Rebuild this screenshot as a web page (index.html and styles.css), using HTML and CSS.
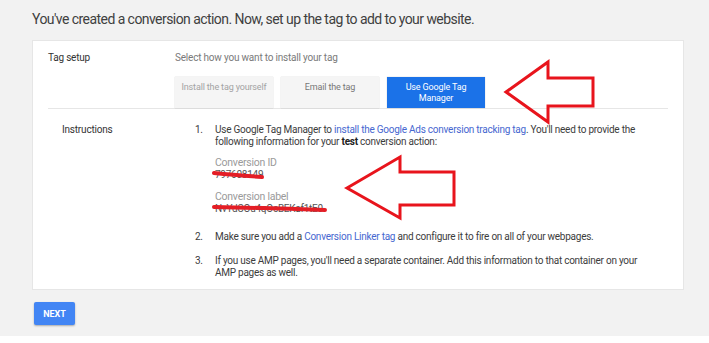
FILE: index.html
```html
<!DOCTYPE html>
<html>
<head>
<meta charset="utf-8">
<link rel="stylesheet" href="styles.css">
</head>
<body>
<div class="page">
  <h1 class="title">You've created a conversion action. Now, set up the tag to add to your website.</h1>
  <div class="card">
    <div class="setup">
      <div class="label">Tag setup</div>
      <div class="setup-body">
        <div class="hint">Select how you want to install your tag</div>
        <div class="options">
          <div class="opt opt-dim">Install the tag yourself</div>
          <div class="opt">Email the tag</div>
          <div class="opt opt-active">Use Google Tag Manager</div>
        </div>
      </div>
    </div>
    <div class="instr">
      <div class="label label-instr">Instructions</div>
      <ol class="steps">
        <li class="step">
          <span class="num">1.</span>
          <div class="step-body">
            <p class="line">Use Google Tag Manager to <a class="link">install the Google Ads conversion tracking tag</a>. You'll need to provide the following information for your <b>test</b> conversion action:</p>
            <div class="field">
              <div class="field-label">Conversion ID</div>
              <div class="field-value">797608149</div>
            </div>
            <div class="field">
              <div class="field-label">Conversion label</div>
              <div class="field-value">NvYdCOu4qOcBEKaf1tE0</div>
            </div>
          </div>
        </li>
        <li class="step">
          <span class="num">2.</span>
          <div class="step-body"><p class="line">Make sure you add a <a class="link">Conversion Linker tag</a> and configure it to fire on all of your webpages.</p></div>
        </li>
        <li class="step">
          <span class="num">3.</span>
          <div class="step-body"><p class="line">If you use AMP pages, you'll need a separate container. Add this information to that container on your AMP pages as well.</p></div>
        </li>
      </ol>
    </div>
  </div>
  <button class="next">NEXT</button>

  <svg class="marks" width="709" height="343" viewBox="0 0 709 343">
    <g fill="none" stroke="#e8141c" stroke-width="3" stroke-linejoin="miter">
      <path d="M506 92 L548 62 L548 78 L593 78 L593 106 L548 106 L548 122 Z"/>
      <path d="M347 188 L400 157 L400 172 L454 172 L454 205 L400 205 L400 218 Z"/>
    </g>
    <g stroke="#e41e26" stroke-width="4" stroke-linecap="round" fill="none">
      <path d="M214 173 Q235 175 262 177"/>
      <path d="M214 207 Q270 208 325 210"/>
    </g>
  </svg>
</div>
</body>
</html>
```
FILE: styles.css
```css
html, body {
  margin: 0;
  padding: 0;
  background: #ffffff;
}
body {
  font-family: Roboto, "Liberation Sans", sans-serif;
  color: #3c3c3c;
}
.page {
  position: relative;
  height: 336px;
  background: #f2f2f2;
  padding: 0 26px 0 33px;
  box-sizing: border-box;
  overflow: hidden;
}
.title {
  margin: 0 0 0 -1px;
  padding: 11px 0 0 0;
  height: 41px;
  box-sizing: border-box;
  font-size: 14px;
  line-height: 17px;
  font-weight: 400;
  letter-spacing: -0.56px;
  color: #404040;
}
.card {
  background: #ffffff;
  box-shadow: 0 0 0 1px #e6e6e6;
  width: 650px;
  height: 248px;
  box-sizing: border-box;
}
.setup {
  display: flex;
  margin: 0 15px;
  padding-top: 10px;
  border-bottom: 1px solid #e6e6e6;
}
.label {
  font-size: 10px;
  line-height: 14px;
  color: #333;
  letter-spacing: -0.2px;
}
.setup .label { width: 127px; flex: none; }
.hint {
  font-size: 10px;
  line-height: 14px;
  color: #7a7a7a;
  letter-spacing: -0.2px;
}
.options {
  display: flex;
  gap: 8px;
  margin-top: 12px;
}
.opt {
  width: 98px;
  height: 31px;
  box-sizing: border-box;
  padding-top: 5px;
  background: #f5f5f5;
  box-shadow: 0 0 1px rgba(0,0,0,0.25);
  text-align: center;
  font-size: 9px;
  line-height: 11px;
  color: #777;
  letter-spacing: -0.15px;
}
.opt-dim { color: #a3a3a3; }
.opt-active {
  background: #1b72e8;
  color: #ffffff;
  padding: 5px 18px 0;
}
.instr {
  display: flex;
  padding: 15px 0 10px 29px;
}
.label-instr { width: 133px; flex: none; line-height: 12px; }
.steps {
  list-style: none;
  margin: 0;
  padding: 0;
  width: 460px;
}
.step {
  display: flex;
  font-size: 10px;
  line-height: 12px;
  color: #3c3c3c;
  letter-spacing: -0.25px;
  margin-bottom: 12px;
}
.step:first-child { margin-bottom: 16px; }
.num { width: 20px; flex: none; }
.step-body { width: 440px; }
.line { margin: 0; }
.link { color: #4667d0; }
b { font-weight: 700; color: #222; }
.field { margin-top: 9px; }
.field + .field { margin-top: 10px; }
.field-label {
  font-size: 10.5px;
  line-height: 12px;
  color: #9a9a9a;
}
.field-value {
  font-size: 10px;
  line-height: 12px;
  color: #555;
}
.next {
  margin-top: 13px;
  margin-left: 1px;
  width: 41px;
  height: 23px;
  border: none;
  border-radius: 2px;
  background: #4285f4;
  color: #fff;
  font-family: Roboto, "Liberation Sans", sans-serif;
  font-weight: 700;
  font-size: 9px;
  padding: 0;
  box-shadow: 0 1px 2px rgba(0,0,0,0.3);
}
.marks {
  position: absolute;
  left: 0;
  top: 0;
  pointer-events: none;
}
```
